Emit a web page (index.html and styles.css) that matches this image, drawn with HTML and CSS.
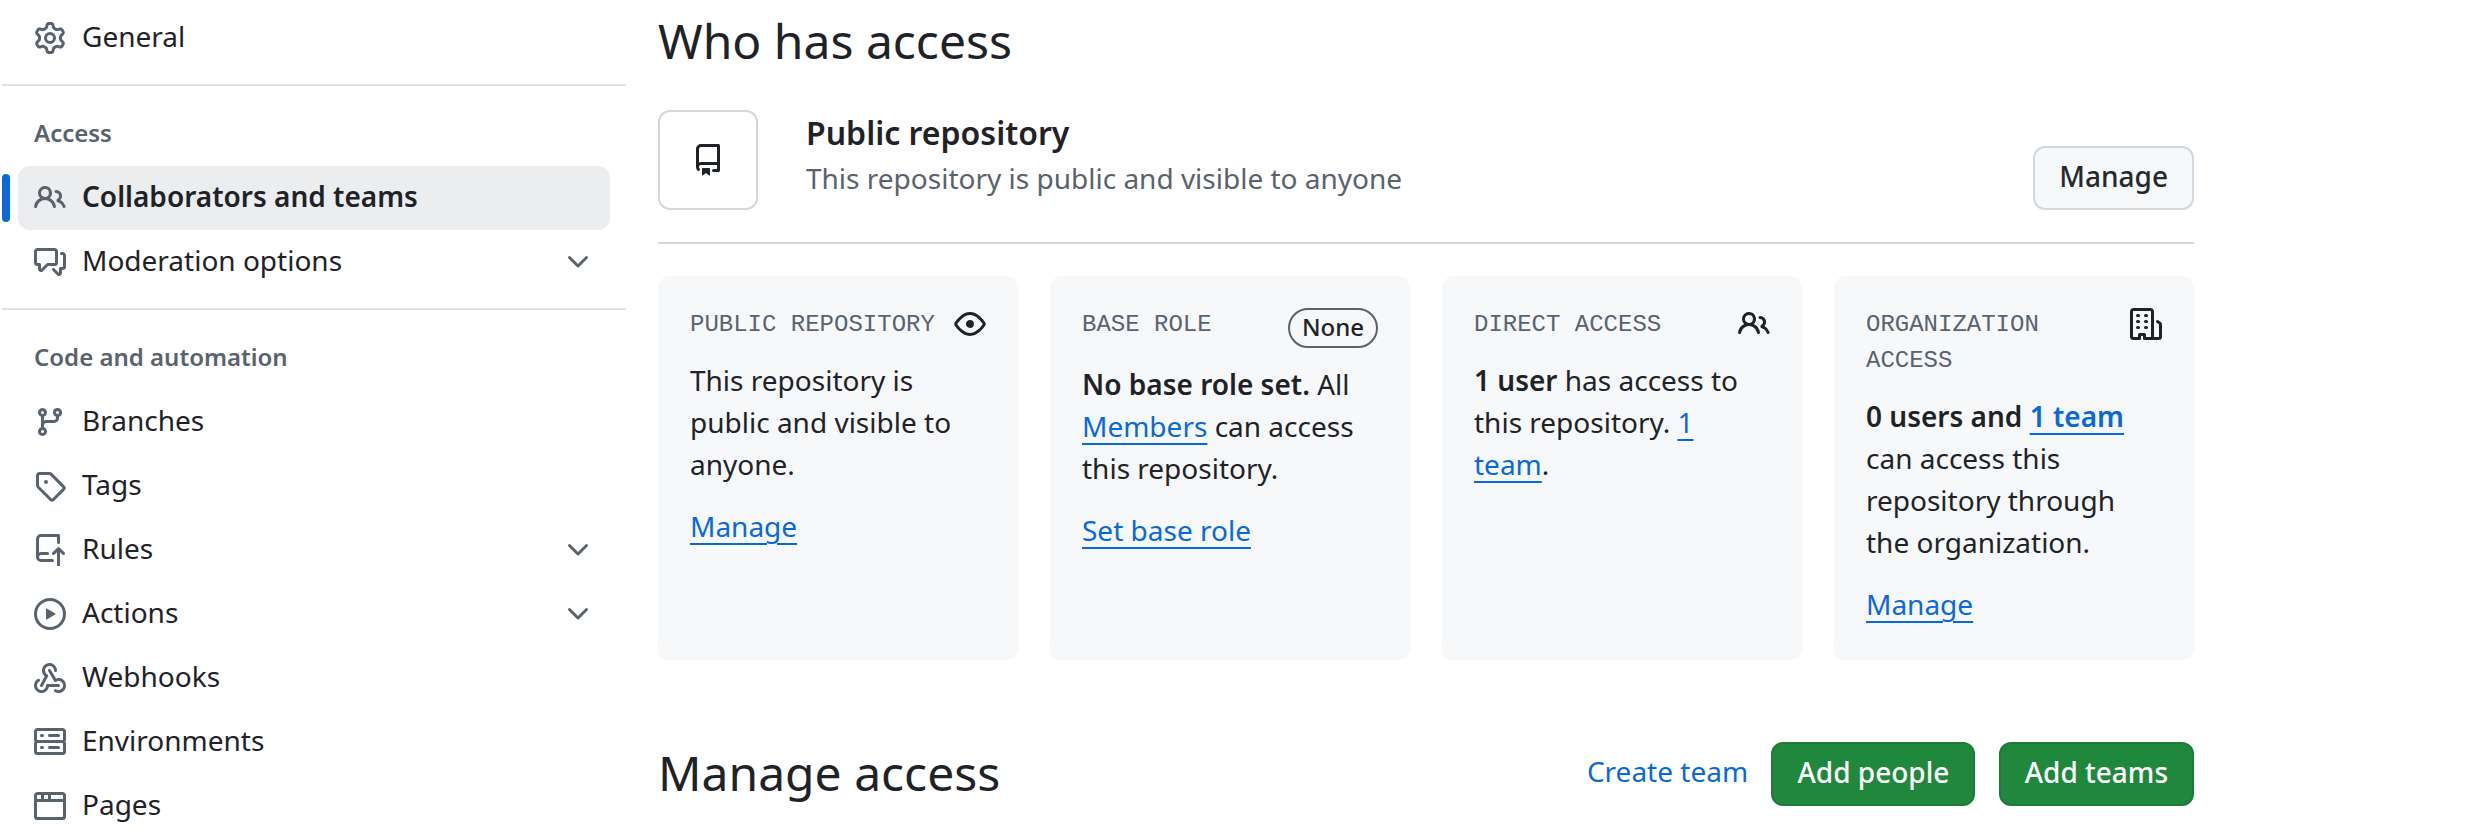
FILE: index.html
```html
<!DOCTYPE html>
<html lang="en">
<head>
<meta charset="utf-8">
<title>Collaborators and teams</title>
<link rel="stylesheet" href="styles.css">
</head>
<body>
<svg class="sprite" aria-hidden="true">
  <symbol id="i-people" viewBox="0 0 16 16"><path d="M2 5.5a3.5 3.5 0 1 1 5.898 2.549 5.508 5.508 0 0 1 3.034 4.084.75.75 0 1 1-1.482.235 4 4 0 0 0-7.9 0 .75.75 0 0 1-1.482-.236A5.507 5.507 0 0 1 3.102 8.05 3.493 3.493 0 0 1 2 5.5ZM11 4a3.001 3.001 0 0 1 2.22 5.018 5.01 5.01 0 0 1 2.56 3.012.749.749 0 0 1-.885.954.752.752 0 0 1-.549-.514 3.507 3.507 0 0 0-2.522-2.372.75.75 0 0 1-.574-.73v-.352a.75.75 0 0 1 .416-.672A1.5 1.5 0 0 0 11 5.5.75.75 0 0 1 11 4Zm-5.5-.5a2 2 0 1 0-.001 3.999A2 2 0 0 0 5.5 3.5Z"/></symbol>
  <symbol id="i-chevron" viewBox="0 0 16 16"><path d="M12.78 5.22a.749.749 0 0 1 0 1.06l-4.25 4.25a.749.749 0 0 1-1.06 0L3.22 6.28a.749.749 0 1 1 1.06-1.06L8 8.939l3.72-3.719a.749.749 0 0 1 1.06 0Z"/></symbol>
</svg>
<div class="page">
  <nav class="sidebar">
    <ul class="nav-list">
      <li><a class="nav-item" href="#"><svg class="icon" viewBox="0 0 16 16"><path d="M8 0a8.2 8.2 0 0 1 .701.031C9.444.095 9.99.645 10.16 1.29l.288 1.107c.018.066.079.158.212.224.231.114.454.243.668.386.123.082.233.09.299.071l1.103-.303c.644-.176 1.392.021 1.82.63.27.385.506.792.704 1.218.315.675.111 1.422-.364 1.891l-.814.806c-.049.048-.098.147-.088.294.016.257.016.515 0 .772-.01.147.038.246.088.294l.814.806c.475.469.679 1.216.364 1.891a7.977 7.977 0 0 1-.704 1.217c-.428.61-1.176.807-1.82.63l-1.102-.302c-.067-.019-.177-.011-.3.071a5.909 5.909 0 0 1-.668.386c-.133.066-.194.158-.211.224l-.29 1.106c-.168.646-.715 1.196-1.458 1.26a8.006 8.006 0 0 1-1.402 0c-.743-.064-1.289-.614-1.458-1.26l-.289-1.106c-.018-.066-.079-.158-.212-.224a5.738 5.738 0 0 1-.668-.386c-.123-.082-.233-.09-.299-.071l-1.103.303c-.644.176-1.392-.021-1.82-.63a8.12 8.12 0 0 1-.704-1.218c-.315-.675-.111-1.422.363-1.891l.815-.806c.05-.048.098-.147.088-.294a6.214 6.214 0 0 1 0-.772c.01-.147-.038-.246-.088-.294l-.815-.806C.635 6.045.431 5.298.746 4.623a7.92 7.92 0 0 1 .704-1.217c.428-.61 1.176-.807 1.82-.63l1.102.302c.067.019.177.011.3-.071.214-.143.437-.272.668-.386.133-.066.194-.158.211-.224l.29-1.106C6.009.645 6.556.095 7.299.03 7.53.01 7.764 0 8 0Zm-.571 1.525c-.036.003-.108.036-.137.146l-.289 1.105c-.147.561-.549.967-.998 1.189-.173.086-.34.183-.5.29-.417.278-.97.423-1.529.27l-1.103-.303c-.109-.03-.175.016-.195.045-.22.312-.412.644-.573.99-.014.031-.021.11.059.19l.815.806c.411.406.562.957.53 1.456a4.709 4.709 0 0 0 0 .582c.032.499-.119 1.05-.53 1.456l-.815.806c-.081.08-.073.159-.059.19.162.346.353.677.573.989.02.03.085.076.195.046l1.102-.303c.56-.153 1.113-.008 1.53.27.161.107.328.204.501.29.447.222.85.629.997 1.189l.289 1.105c.029.109.101.143.137.146a6.6 6.6 0 0 0 1.142 0c.036-.003.108-.036.137-.146l.289-1.105c.147-.561.549-.967.998-1.189.173-.086.34-.183.5-.29.417-.278.97-.423 1.529-.27l1.103.303c.109.029.175-.016.195-.045.22-.313.411-.644.573-.99.014-.031.021-.11-.059-.19l-.815-.806c-.411-.406-.562-.957-.53-1.456a4.709 4.709 0 0 0 0-.582c-.032-.499.119-1.05.53-1.456l.815-.806c.081-.08.073-.159.059-.19a6.464 6.464 0 0 0-.573-.989c-.02-.03-.085-.076-.195-.046l-1.102.303c-.56.153-1.113.008-1.53-.27a4.44 4.44 0 0 0-.501-.29c-.447-.222-.85-.629-.997-1.189l-.289-1.105c-.029-.11-.101-.143-.137-.146a6.6 6.6 0 0 0-1.142 0ZM11 8a3 3 0 1 1-6 0 3 3 0 0 1 6 0ZM9.5 8a1.5 1.5 0 1 0-3.001.001A1.5 1.5 0 0 0 9.5 8Z"/></svg><span>General</span></a></li>
    </ul>
    <section class="nav-group">
      <h3 class="nav-heading">Access</h3>
      <ul class="nav-list">
        <li><a class="nav-item nav-item-current" href="#"><svg class="icon"><use href="#i-people"/></svg><span>Collaborators and teams</span></a></li>
        <li><a class="nav-item" href="#"><svg class="icon" viewBox="0 0 16 16"><path d="M1.75 1h8.5c.966 0 1.75.784 1.75 1.75v5.5A1.75 1.75 0 0 1 10.25 10H7.061l-2.574 2.573A1.458 1.458 0 0 1 2 11.543V10h-.25A1.75 1.75 0 0 1 0 8.25v-5.5C0 1.784.784 1 1.75 1ZM1.5 2.75v5.5c0 .138.112.25.25.25h1a.75.75 0 0 1 .75.75v2.19l2.72-2.72a.749.749 0 0 1 .53-.22h3.5a.25.25 0 0 0 .25-.25v-5.5a.25.25 0 0 0-.25-.25h-8.5a.25.25 0 0 0-.25.25Zm13 2a.25.25 0 0 0-.25-.25h-.5a.75.75 0 0 1 0-1.5h.5c.966 0 1.75.784 1.75 1.75v5.5A1.75 1.75 0 0 1 14.25 12H14v1.543a1.458 1.458 0 0 1-2.487 1.03L9.22 12.28a.749.749 0 0 1 .326-1.275.749.749 0 0 1 .734.215l2.22 2.22v-2.19a.75.75 0 0 1 .75-.75h1a.25.25 0 0 0 .25-.25Z"/></svg><span>Moderation options</span><svg class="icon chevron"><use href="#i-chevron"/></svg></a></li>
      </ul>
    </section>
    <section class="nav-group">
      <h3 class="nav-heading">Code and automation</h3>
      <ul class="nav-list">
        <li><a class="nav-item" href="#"><svg class="icon" viewBox="0 0 16 16"><path d="M9.5 3.25a2.25 2.25 0 1 1 3 2.122V6A2.5 2.5 0 0 1 10 8.5H6a1 1 0 0 0-1 1v1.128a2.251 2.251 0 1 1-1.5 0V5.372a2.25 2.25 0 1 1 1.5 0v1.836A2.493 2.493 0 0 1 6 7h4a1 1 0 0 0 1-1v-.628A2.25 2.25 0 0 1 9.5 3.25Zm-6 0a.75.75 0 1 0 1.5 0 .75.75 0 0 0-1.5 0Zm8.25-.75a.75.75 0 1 0 0 1.5.75.75 0 0 0 0-1.5ZM4.25 12a.75.75 0 1 0 0 1.5.75.75 0 0 0 0-1.5Z"/></svg><span>Branches</span></a></li>
        <li><a class="nav-item" href="#"><svg class="icon" viewBox="0 0 16 16"><path d="M1 7.775V2.75C1 1.784 1.784 1 2.75 1h5.025c.464 0 .91.184 1.238.513l6.25 6.25a1.75 1.75 0 0 1 0 2.474l-5.026 5.026a1.75 1.75 0 0 1-2.474 0l-6.25-6.25A1.752 1.752 0 0 1 1 7.775Zm1.5 0c0 .066.026.13.073.177l6.25 6.25a.25.25 0 0 0 .354 0l5.025-5.025a.25.25 0 0 0 0-.354l-6.25-6.25a.25.25 0 0 0-.177-.073H2.75a.25.25 0 0 0-.25.25ZM6 5a1 1 0 1 1 0 2 1 1 0 0 1 0-2Z"/></svg><span>Tags</span></a></li>
        <li><a class="nav-item" href="#"><svg class="icon" viewBox="0 0 16 16"><path d="M1 2.5A2.5 2.5 0 0 1 3.5 0h8.75a.75.75 0 0 1 .75.75v3.5a.75.75 0 0 1-1.5 0V1.5h-8a1 1 0 0 0-1 1v6.708A2.493 2.493 0 0 1 3.5 9h3.25a.75.75 0 0 1 0 1.5H3.5a1 1 0 0 0 0 2h5.75a.75.75 0 0 1 0 1.5H3.5A2.5 2.5 0 0 1 1 11.5Zm13.23 7.79-.001-.001-1.224-1.224v7.184a.75.75 0 0 1-1.5 0V9.066L10.28 10.29a.75.75 0 0 1-1.06-1.061l2.505-2.504a.75.75 0 0 1 1.06 0L15.29 9.23a.751.751 0 0 1-.018 1.042.751.751 0 0 1-1.042.018Z"/></svg><span>Rules</span><svg class="icon chevron"><use href="#i-chevron"/></svg></a></li>
        <li><a class="nav-item" href="#"><svg class="icon" viewBox="0 0 16 16"><path d="M8 0a8 8 0 1 1 0 16A8 8 0 0 1 8 0ZM1.5 8a6.5 6.5 0 1 0 13 0 6.5 6.5 0 0 0-13 0Zm4.879-2.773 4.264 2.559a.25.25 0 0 1 0 .428l-4.264 2.559A.25.25 0 0 1 6 10.559V5.442a.25.25 0 0 1 .379-.215Z"/></svg><span>Actions</span><svg class="icon chevron"><use href="#i-chevron"/></svg></a></li>
        <li><a class="nav-item" href="#"><svg class="icon" viewBox="0 0 16 16"><path d="M5.5 4.25a2.25 2.25 0 0 1 4.5 0 .75.75 0 0 0 1.5 0 3.75 3.75 0 1 0-6.14 2.889l-2.272 4.258a.75.75 0 0 0 1.324.706L7 7.25a.75.75 0 0 0-.309-1.015A2.25 2.25 0 0 1 5.5 4.25Z"/><path d="M7.364 3.607a.75.75 0 0 1 1.03.257l2.608 4.349a3.75 3.75 0 1 1-.628 6.785.75.75 0 0 1 .752-1.299 2.25 2.25 0 1 0-.033-3.88.75.75 0 0 1-1.03-.256L7.107 4.636a.75.75 0 0 1 .257-1.03Z"/><path d="M2.9 8.776A.75.75 0 0 1 2.625 9.8 2.25 2.25 0 1 0 6 11.75a.75.75 0 0 1 .75-.751h5.5a.75.75 0 0 1 0 1.5H7.425a3.751 3.751 0 1 1-5.55-3.998.75.75 0 0 1 1.024.274Z"/></svg><span>Webhooks</span></a></li>
        <li><a class="nav-item" href="#"><svg class="icon" viewBox="0 0 16 16"><path d="M1.75 1h12.5c.966 0 1.75.784 1.75 1.75v4c0 .372-.116.717-.314 1 .198.283.314.628.314 1v4a1.75 1.75 0 0 1-1.75 1.75H1.75A1.75 1.75 0 0 1 0 12.75v-4c0-.358.109-.707.314-1a1.739 1.739 0 0 1-.314-1v-4C0 1.784.784 1 1.75 1ZM1.5 2.75v4c0 .138.112.25.25.25h12.5a.25.25 0 0 0 .25-.25v-4a.25.25 0 0 0-.25-.25H1.75a.25.25 0 0 0-.25.25Zm.25 5.75a.25.25 0 0 0-.25.25v4c0 .138.112.25.25.25h12.5a.25.25 0 0 0 .25-.25v-4a.25.25 0 0 0-.25-.25ZM7 4.75A.75.75 0 0 1 7.75 4h4.5a.75.75 0 0 1 0 1.5h-4.5A.75.75 0 0 1 7 4.75ZM7.75 10h4.5a.75.75 0 0 1 0 1.5h-4.5a.75.75 0 0 1 0-1.5ZM3 4.75A.75.75 0 0 1 3.75 4h.5a.75.75 0 0 1 0 1.5h-.5A.75.75 0 0 1 3 4.75ZM3.75 10h.5a.75.75 0 0 1 0 1.5h-.5a.75.75 0 0 1 0-1.5Z"/></svg><span>Environments</span></a></li>
        <li><a class="nav-item" href="#"><svg class="icon" viewBox="0 0 16 16"><path d="M0 2.75C0 1.784.784 1 1.75 1h12.5c.966 0 1.75.784 1.75 1.75v10.5A1.75 1.75 0 0 1 14.25 15H1.75A1.75 1.75 0 0 1 0 13.25ZM14.5 6h-13v7.25c0 .138.112.25.25.25h12.5a.25.25 0 0 0 .25-.25Zm-6-3.5v2h6V2.75a.25.25 0 0 0-.25-.25ZM5 2.5v2h2v-2Zm-3.25 0a.25.25 0 0 0-.25.25V4.5h2v-2Z"/></svg><span>Pages</span></a></li>
      </ul>
    </section>
  </nav>

  <main class="content">
    <h2 class="title">Who has access</h2>
    <section class="visibility">
      <div class="repo-box"><svg class="icon" viewBox="0 0 16 16"><path d="M2 2.5A2.5 2.5 0 0 1 4.5 0h8.75a.75.75 0 0 1 .75.75v12.5a.75.75 0 0 1-.75.75h-2.5a.75.75 0 0 1 0-1.5h1.75v-2h-8a1 1 0 0 0-.714 1.7.75.75 0 1 1-1.072 1.05A2.495 2.495 0 0 1 2 11.5Zm10.5-1h-8a1 1 0 0 0-1 1v6.708A2.486 2.486 0 0 1 4.5 9h8ZM5 12.25a.25.25 0 0 1 .25-.25h3.5a.25.25 0 0 1 .25.25v3.25a.25.25 0 0 1-.4.2l-1.45-1.087a.249.249 0 0 0-.3 0L5.4 15.7a.25.25 0 0 1-.4-.2Z"/></svg></div>
      <div class="visibility-text">
        <strong class="visibility-name">Public repository</strong>
        <span class="visibility-note">This repository is public and visible to anyone</span>
      </div>
      <button class="btn">Manage</button>
    </section>

    <section class="cards">
      <article class="card">
        <header class="card-head"><h4 class="card-label">Public repository</h4><svg class="icon" viewBox="0 0 16 16"><path d="M8 2c1.981 0 3.671.992 4.933 2.078 1.27 1.091 2.187 2.345 2.637 3.023a1.62 1.62 0 0 1 0 1.798c-.45.678-1.367 1.932-2.637 3.023C11.67 13.008 9.981 14 8 14c-1.981 0-3.671-.992-4.933-2.078C1.797 10.83.88 9.576.43 8.898a1.62 1.62 0 0 1 0-1.798c.45-.677 1.367-1.931 2.637-3.022C4.33 2.992 6.019 2 8 2ZM1.679 7.932a.12.12 0 0 0 0 .136c.411.622 1.241 1.75 2.366 2.717C5.176 11.758 6.527 12.5 8 12.5c1.473 0 2.825-.742 3.955-1.715 1.124-.967 1.954-2.096 2.366-2.717a.12.12 0 0 0 0-.136c-.412-.621-1.242-1.75-2.366-2.717C10.824 4.242 9.473 3.5 8 3.5c-1.473 0-2.825.742-3.955 1.715-1.124.967-1.954 2.096-2.366 2.717ZM8 10a2 2 0 1 1-.001-3.999A2 2 0 0 1 8 10Z"/></svg></header>
        <p class="card-text">This repository is public and visible to anyone.</p>
        <a class="link" href="#">Manage</a>
      </article>
      <article class="card">
        <header class="card-head"><h4 class="card-label">Base role</h4><span class="badge">None</span></header>
        <p class="card-text"><strong>No base role set.</strong> All <a class="link" href="#">Members</a> can access this repository.</p>
        <a class="link" href="#">Set base role</a>
      </article>
      <article class="card">
        <header class="card-head"><h4 class="card-label">Direct access</h4><svg class="icon"><use href="#i-people"/></svg></header>
        <p class="card-text"><strong>1 user</strong> has access to this repository. <a class="link" href="#">1 team</a>.</p>
      </article>
      <article class="card">
        <header class="card-head"><h4 class="card-label">Organization access</h4><svg class="icon" viewBox="0 0 16 16"><path d="M1.75 16A1.75 1.75 0 0 1 0 14.25V1.75C0 .784.784 0 1.75 0h8.5C11.216 0 12 .784 12 1.75v12.5c0 .085-.006.168-.018.25h2.268a.25.25 0 0 0 .25-.25V8.285a.25.25 0 0 0-.111-.208l-1.055-.703a.749.749 0 1 1 .832-1.248l1.055.703c.487.325.779.871.779 1.456v5.965A1.75 1.75 0 0 1 14.25 16h-3.5a.766.766 0 0 1-.197-.026c-.099.017-.2.026-.303.026h-3a.75.75 0 0 1-.75-.75V14h-1v1.25a.75.75 0 0 1-.75.75Zm-.25-1.75c0 .138.112.25.25.25H4v-1.25a.75.75 0 0 1 .75-.75h2.5a.75.75 0 0 1 .75.75v1.25h2.25a.25.25 0 0 0 .25-.25V1.75a.25.25 0 0 0-.25-.25h-8.5a.25.25 0 0 0-.25.25ZM3.75 6h.5a.75.75 0 0 1 0 1.5h-.5a.75.75 0 0 1 0-1.5ZM3 3.75A.75.75 0 0 1 3.75 3h.5a.75.75 0 0 1 0 1.5h-.5A.75.75 0 0 1 3 3.75Zm4 3A.75.75 0 0 1 7.75 6h.5a.75.75 0 0 1 0 1.5h-.5A.75.75 0 0 1 7 6.75ZM7.75 3h.5a.75.75 0 0 1 0 1.5h-.5a.75.75 0 0 1 0-1.5ZM3 9.75A.75.75 0 0 1 3.75 9h.5a.75.75 0 0 1 0 1.5h-.5A.75.75 0 0 1 3 9.75ZM7.75 9h.5a.75.75 0 0 1 0 1.5h-.5a.75.75 0 0 1 0-1.5Z"/></svg></header>
        <p class="card-text"><strong>0 users and <a class="link" href="#">1 team</a></strong> can access this repository through the organization.</p>
        <a class="link" href="#">Manage</a>
      </article>
    </section>

    <section class="manage">
      <h2 class="title">Manage access</h2>
      <a class="create-link" href="#">Create team</a>
      <button class="btn btn-primary">Add people</button>
      <button class="btn btn-primary">Add teams</button>
    </section>
  </main>
</div>
</body>
</html>
```
FILE: styles.css
```css
* {
  box-sizing: border-box;
}

body {
  margin: 0;
  height: 829px;
  overflow: hidden;
  background: #fff;
  color: #1f2328;
  font: 400 28px/42px "Noto Sans", sans-serif;
}

h2, h3, h4, p, ul {
  margin: 0;
  padding: 0;
  font-weight: 400;
}

ul {
  list-style: none;
}

strong {
  font-weight: 600;
}

.sprite {
  display: none;
}

.icon {
  flex: none;
  width: 32px;
  height: 32px;
  fill: currentColor;
}

.page {
  display: flex;
  gap: 32px;
  padding-left: 2px;
}

/* Sidebar */
.sidebar {
  flex: none;
  width: 624px;
  padding-top: 6px;
}

.nav-group {
  margin-top: 14px;
  border-top: 2px solid #dfe4e8;
}

.nav-heading {
  height: 80px;
  padding: 29px 32px 0;
  color: #59636e;
  font-size: 24px;
  font-weight: 600;
  line-height: 36px;
}

.nav-list {
  padding: 0 16px;
}

.nav-item {
  position: relative;
  display: flex;
  align-items: center;
  gap: 16px;
  height: 64px;
  padding: 0 16px;
  border-radius: 12px;
  color: #1f2328;
  line-height: 40px;
  text-decoration: none;
}

.nav-item span {
  flex: 1;
  padding-bottom: 4px;
}

.nav-item .icon {
  color: #59636e;
}

.nav-item-current {
  background: #ecedef;
  font-weight: 600;
}

.nav-item-current::before {
  content: "";
  position: absolute;
  top: 8px;
  left: -16px;
  width: 8px;
  height: 48px;
  border-radius: 6px;
  background: #0969da;
}

/* Main column */
.content {
  flex: none;
  width: 1536px;
  padding-top: 5px;
}

.title {
  font-size: 48px;
  line-height: 72px;
}

.visibility {
  display: flex;
  align-items: flex-end;
  height: 134px;
  margin-top: 33px;
  padding-bottom: 32px;
  border-bottom: 2px solid #d1d9e0;
}

.repo-box {
  display: flex;
  align-items: center;
  justify-content: center;
  width: 100px;
  height: 100px;
  border: 2px solid #d1d9e0;
  border-radius: 12px;
}

.visibility-text {
  display: flex;
  flex: 1;
  flex-direction: column;
  height: 101px;
  padding-left: 48px;
}

.visibility-name {
  font-size: 32px;
  line-height: 48px;
}

.visibility-note {
  color: #59636e;
}

.btn {
  height: 64px;
  padding: 0 24px 4px;
  border: 2px solid #d1d9e0;
  border-radius: 12px;
  background: #f6f8fa;
  color: #25292e;
  font: 500 28px/40px "Noto Sans", sans-serif;
}

.btn-primary {
  border-color: #1f7b3a;
  background: #1f883d;
  color: #fff;
}

.cards {
  display: grid;
  grid-template-columns: repeat(4, 1fr);
  gap: 32px;
  margin-top: 32px;
}

.card {
  height: 382px;
  padding: 32px;
  border-radius: 12px;
  background: #f6f8fa;
  box-shadow: 0 2px 0 rgba(31, 35, 40, 0.04);
}

.card-head {
  display: flex;
  align-items: flex-start;
  justify-content: space-between;
  margin-bottom: 15px;
}

.card-label {
  margin-top: -1px;
  padding-bottom: 1px;
  color: #59636e;
  font: 400 24px/36px "Liberation Mono", monospace;
  text-transform: uppercase;
}

.badge {
  height: 40px;
  padding: 0 12px;
  border: 2px solid #59636e;
  border-radius: 20px;
  font-size: 24px;
  font-weight: 500;
  line-height: 34px;
}

.card-text {
  margin-bottom: 20px;
}

.link {
  color: #0969da;
  text-decoration: underline;
  text-decoration-thickness: 2px;
  text-underline-offset: 6px;
}

.manage {
  display: flex;
  align-items: center;
  gap: 23.4px;
  margin-top: 79px;
}

.manage .title {
  flex: 1;
}

.manage .btn {
  margin-top: 2px;
}

.create-link {
  padding-bottom: 4px;
  color: #0969da;
  text-decoration: none;
}
```
